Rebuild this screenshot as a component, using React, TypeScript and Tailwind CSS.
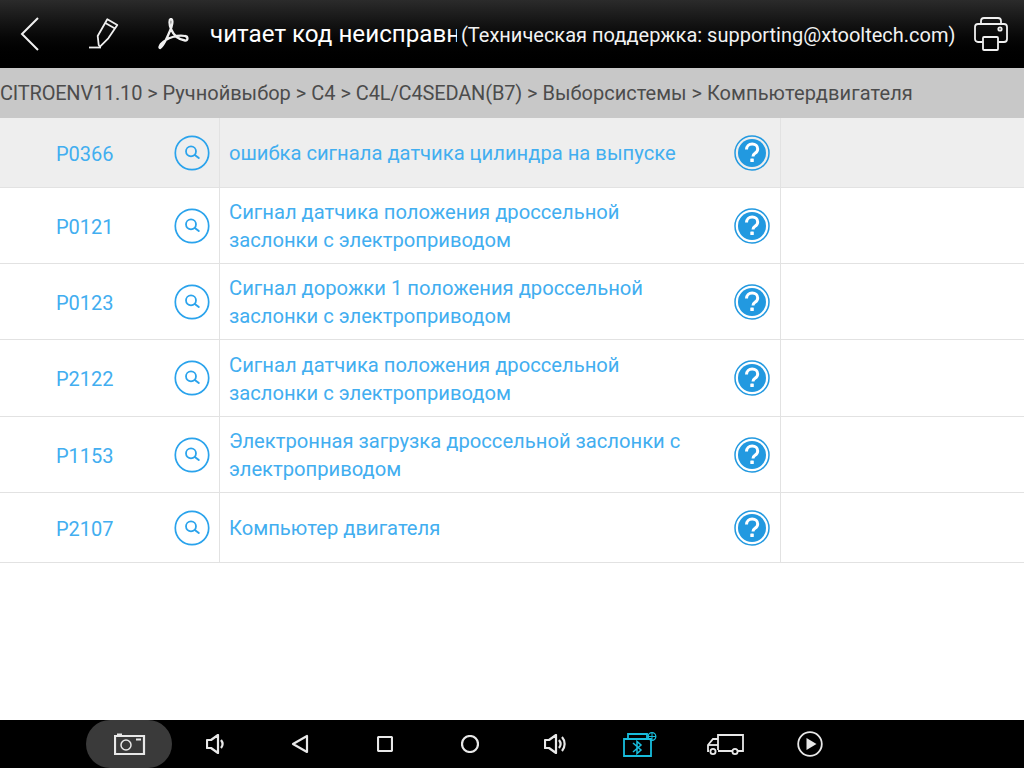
import React from "react";

function SearchBadge() {
  return (
    <svg width="36" height="36" viewBox="0 0 36 36" fill="none" className="-ml-[1px]">
      <circle cx="18" cy="18" r="16.7" stroke="#2aa3ec" strokeWidth="1.7" />
      <circle cx="17" cy="16.300" r="5" stroke="#2aa3ec" strokeWidth="1.800" />
      <path d="M20.800 20l4 3" stroke="#2aa3ec" strokeWidth="2" strokeLinecap="round" />
    </svg>
  );
}

function HelpBadge() {
  return (
    <svg width="36" height="36" viewBox="0 0 36 36">
      <circle cx="18" cy="18" r="17" fill="none" stroke="#2299e0" strokeWidth="1.500" />
      <circle cx="18" cy="18" r="14" fill="#2299e0" />
      <path d="M12.500 14.600c0-3.400 2.400-5.600 5.700-5.600 3.200 0 5.500 2 5.500 4.900 0 2.100-1 3.200-2.700 4.400-1.500 1-2 1.700-2 3.300" fill="none" stroke="#fff" strokeWidth="3" />
      <rect x="16.300" y="23.500" width="3.500" height="3.500" rx="0.600" fill="#fff" />
    </svg>
  );
}

const rows = [
  { code: "P0366", lines: ["ошибка сигнала датчика цилиндра на выпуске"], h: "h-[70px]", bg: "bg-[#eeeeee]" },
  { code: "P0121", lines: ["Сигнал датчика положения дроссельной", "заслонки с электроприводом"], h: "h-[76px]", bg: "bg-white" },
  { code: "P0123", lines: ["Сигнал дорожки 1 положения дроссельной", "заслонки с электроприводом"], h: "h-[76px]", bg: "bg-white" },
  { code: "P2122", lines: ["Сигнал датчика положения дроссельной", "заслонки с электроприводом"], h: "h-[77px]", bg: "bg-white" },
  { code: "P1153", lines: ["Электронная загрузка дроссельной заслонки с", "электроприводом"], h: "h-[76px]", bg: "bg-white" },
  { code: "P2107", lines: ["Компьютер двигателя"], h: "h-[70px]", bg: "bg-white" },
];

function Row({ code, lines, h, bg }: { code: string; lines: string[]; h: string; bg: string }) {
  return (
    <div className={`flex ${h} ${bg} border-b border-[#e2e2e2]`}>
      <div className="w-[220px] shrink-0 border-r border-[#e2e2e2] flex items-center">
        <span className="ml-[56px] w-[119px] pt-[2px] text-[20px] text-[#42aef0]">{code}</span>
        <SearchBadge />
      </div>
      <div className="w-[561px] shrink-0 border-r border-[#e2e2e2] flex items-center pl-[9px] pr-[10px]">
        <div className="flex-1 text-[20.200px] leading-[28px] text-[#42aef0] mt-[1px]">
          {lines.map((l) => (
            <div key={l} className="whitespace-nowrap">{l}</div>
          ))}
        </div>
        <HelpBadge />
      </div>
      <div className="flex-1" />
    </div>
  );
}

function Icons() {
  const s = { fill: "none", stroke: "#e8e8e8", strokeWidth: 2.2 } as const;
  return (
    <>
      <div className="w-[86px] shrink-0" />
      <div className="w-[86px] h-[48px] rounded-l-full rounded-r-full bg-[#3a3a3a] flex items-center justify-center shrink-0">
        <svg width="32" height="22" viewBox="0 0 32 22" {...s} className="ml-[2px]">
          <path d="M1 3h29v18H1z" />
          <circle cx="12" cy="12" r="5" strokeWidth="1.500" />
          <path d="M3 1.500h5M22 6.500h5" strokeWidth="1.800" />
        </svg>
      </div>
      <div className="w-[87px] flex justify-center shrink-0">
        <svg width="20" height="20" viewBox="0 0 20 20" {...s}>
          <path d="M1 6h4l7-5v18l-7-5H1z" strokeLinejoin="round" />
          <path d="M15 6c2 2.500 2 5.500 0 8" />
        </svg>
      </div>
      <div className="w-[82px] flex justify-center shrink-0">
        <svg width="18" height="20" viewBox="0 0 18 20" {...s}>
          <path d="M16 2v16L2 10z" strokeLinejoin="round" />
        </svg>
      </div>
      <div className="w-[88px] flex justify-center shrink-0">
        <svg width="16" height="16" viewBox="0 0 16 16" {...s}>
          <rect x="1" y="1" width="14" height="14" rx="1" />
        </svg>
      </div>
      <div className="w-[82px] flex justify-center shrink-0">
        <svg width="18" height="18" viewBox="0 0 18 18" {...s}>
          <circle cx="9" cy="9" r="8" />
        </svg>
      </div>
      <div className="w-[89px] flex justify-center shrink-0">
        <svg width="24" height="20" viewBox="0 0 24 20" {...s}>
          <path d="M1 6h4l7-5v18l-7-5H1z" strokeLinejoin="round" />
          <path d="M15 6c2 2.500 2 5.500 0 8M18 3c3.500 4 3.500 10 0 14" />
        </svg>
      </div>
      <div className="w-[79px] flex justify-center shrink-0">
        <svg width="34" height="25" viewBox="0 0 34 25" fill="none" stroke="#18bddd" strokeWidth="1.800">
          <path d="M1 7h27v17H1zM5 7V2h19v5" />
          <path d="M10 11l8 7-4 3.500V9.500l4 3.500-8 7" strokeWidth="1.500" />
          <circle cx="29" cy="4.500" r="3.800" strokeWidth="1.300" />
          <path d="M29 .5v8M25 4.500h8" strokeWidth="1" />
        </svg>
      </div>
      <div className="w-[91px] flex justify-center shrink-0">
        <svg width="38" height="21" viewBox="0 0 38 21" {...s} strokeWidth="1.800">
          <path d="M12 16V1h25v16H32M26 17H12M3 17H2v-6l5-6h5" />
          <path d="M2 11h10" />
          <circle cx="7" cy="17.500" r="2.600" />
          <circle cx="29" cy="17.500" r="2.600" />
        </svg>
      </div>
      <div className="w-[79px] flex justify-center shrink-0">
        <svg width="26" height="26" viewBox="0 0 26 26">
          <circle cx="13" cy="13" r="11.800" fill="none" stroke="#e8e8e8" strokeWidth="1.800" />
          <path d="M9.500 7l10 6-10 6z" fill="#e8e8e8" />
        </svg>
      </div>
    </>
  );
}

export default function App() {
  return (
    <div className="w-[1024px] h-[768px] flex flex-col bg-white overflow-hidden font-['Roboto','Noto_Sans',sans-serif]">
      <div className="h-[68px] shrink-0 flex items-center bg-gradient-to-b from-[#2b2b2b] to-[#000000] text-white">
        <div className="w-[60px] flex justify-center shrink-0 pr-[1px]">
          <svg width="20" height="34" viewBox="0 0 20 34" fill="none" stroke="#f0f0f0" strokeWidth="2">
            <path d="M18 1L2 17l16 16" />
          </svg>
        </div>
        <div className="w-[86px] shrink-0 flex pl-[29px]">
          <svg width="30" height="32" viewBox="0 0 30 32" fill="none" stroke="#f0f0f0" strokeWidth="1.800">
            <path d="M0 29.500h12" />
            <path d="M18.300 1.300L28.300 7l-9 13.300-8.300 8.400-1.300-1.700-1-9z" strokeLinejoin="round" />
            <path d="M16.300 5L26 10.500" />
          </svg>
        </div>
        <div className="w-[64px] shrink-0 flex pl-[12px]">
          <svg width="32" height="32" viewBox="0 0 32 32" fill="none" stroke="#f0f0f0" strokeWidth="2.300">
            <path d="M2 30C5 28 10 18 13.500 9 15 4 14.500 1 13 1 11 1 11 6 13 11 15.500 17 20 21.500 27 22.500 30 23 30.500 18.500 27 18 20 16.500 9 19.500 3 26 1.500 28 1 30 2 30z" strokeLinejoin="round" />
          </svg>
        </div>
        <div className="w-[247px] shrink-0 overflow-hidden whitespace-nowrap text-[24.200px]">читает код неисправности</div>
        <div className="ml-[4px] w-[510px] shrink-0 whitespace-nowrap text-[20px] text-[#f2f2f2] pt-[2px]">(Техническая поддержка: supporting@xtooltech.com)</div>
        <div className="shrink-0 ml-[3px]">
          <svg width="34" height="34" viewBox="0 0 34 34" fill="none" stroke="#f0f0f0" strokeWidth="1.800">
            <path d="M8.500 25H4a3 3 0 0 1-3-3V10a3 3 0 0 1 3-3h26a3 3 0 0 1 3 3v12a3 3 0 0 1-3 3h-5.500" />
            <path d="M7 7V4a3 3 0 0 1 3-3h14a3 3 0 0 1 3 3v3" />
            <rect x="9" y="20" width="15" height="13" rx="1" />
            <circle cx="26" cy="12" r="1.700" />
          </svg>
        </div>
      </div>
      <div className="h-[50px] shrink-0 bg-[#c8c8c8] flex items-center whitespace-nowrap text-[20px] text-[#4c4c4c]">
        <span className="whitespace-pre">
          <span className="tracking-[-0.2px]">CITROENV11.10</span> &gt; Ручнойвыбор &gt; C4 &gt; <span className="tracking-[-0.15px]">C4L/C4SEDAN(B7)</span> &gt; Выборсистемы &gt; <span className="tracking-[0.1px]">Компьютердвигателя</span>
        </span>
      </div>
      <div className="flex-1">
        {rows.map((r) => (
          <Row key={r.code} {...r} />
        ))}
      </div>
      <div className="h-[48px] shrink-0 bg-black flex items-center">
        <Icons />
      </div>
    </div>
  );
}
